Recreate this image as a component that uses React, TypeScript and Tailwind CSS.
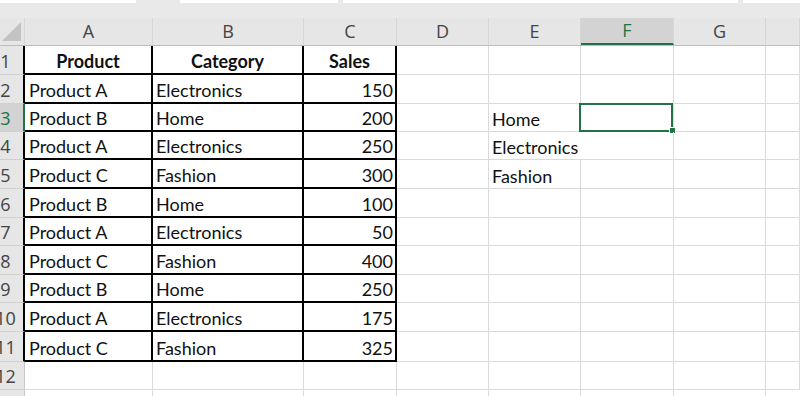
import React from "react";

type Row = [string, string, string];

const rows: Row[] = [
  ["Product A", "Electronics", "150"],
  ["Product B", "Home", "200"],
  ["Product A", "Electronics", "250"],
  ["Product C", "Fashion", "300"],
  ["Product B", "Home", "100"],
  ["Product A", "Electronics", "50"],
  ["Product C", "Fashion", "400"],
  ["Product B", "Home", "250"],
  ["Product A", "Electronics", "175"],
  ["Product C", "Fashion", "325"],
];

const rowHeights = [29, 29, 28, 28, 29, 29, 28, 29, 28, 29, 30, 28];

const sideList: Record<number, string> = { 3: "Home", 4: "Electronics", 5: "Fashion" };

const cellFont = "font-['Lato','Liberation_Sans',sans-serif] text-[18px] leading-[21px] text-[#111]";
const uiFont = "font-['Open_Sans','Liberation_Sans',sans-serif] text-[18px]";

const grid = "border-r border-b border-[#dadada]";
const boxed = "border-r-2 border-b-2 border-black";

function CornerMark() {
  return (
    <svg className="h-full w-full" viewBox="0 0 25 28" aria-hidden="true">
      <polygon points="22,4 22,24 2,24" fill="#c3c3c3" />
    </svg>
  );
}

function ColumnHeader({ label, width, active }: { label?: string; width: string; active?: boolean }) {
  return (
    <div
      className={`${width} flex shrink-0 items-center justify-center border-r border-[#d6d6d6] ${uiFont} ${
        active ? "border-b-2 border-b-[#217346] bg-[#d3d3d3] text-[#217346]" : "text-[#444]"
      }`}
    >
      {label}
    </div>
  );
}

function RowHeader({ n, active, edge }: { n: number; active?: boolean; edge: string }) {
  return (
    <div
      className={`flex w-[25px] shrink-0 items-center overflow-hidden border-b border-[#d0d0d0] ${edge} ${
        active ? "bg-[#d3d3d3] text-[#217346]" : "bg-[#e6e6e6] text-[#444]"
      }`}
    >
      <div className={`flex w-[11px] shrink-0 justify-center pt-[2px] ${uiFont}`}>{n}</div>
    </div>
  );
}

export default function App() {
  return (
    <div className="h-[396px] w-[800px] overflow-hidden bg-[#e6e6e6]">
      {/* formula bar remnants */}
      <div className="flex h-[18px] gap-[5px] bg-[#e9e9e9]">
        <div className="h-[3px] w-[136px] bg-white" />
        <div className="ml-[39px] h-[3px] w-[158px] bg-white" />
        <div className="h-[3px] w-[395px] bg-white" />
        <div className="h-[3px] flex-1 bg-white" />
      </div>

      {/* column letters */}
      <div className="flex h-[28px] border-b border-[#bdbdbd]">
        <div className="w-[25px] shrink-0 border-r border-[#d6d6d6]">
          <CornerMark />
        </div>
        <ColumnHeader label="A" width="w-[128px]" />
        <ColumnHeader label="B" width="w-[151px]" />
        <ColumnHeader label="C" width="w-[93px]" />
        <ColumnHeader label="D" width="w-[92px]" />
        <ColumnHeader label="E" width="w-[92px]" />
        <ColumnHeader label="F" width="w-[93px]" active />
        <ColumnHeader label="G" width="w-[92px]" />
        <ColumnHeader width="flex-1" />
      </div>

      {/* sheet body */}
      <div className="flex flex-col bg-white">
        {rowHeights.map((h, i) => {
          const n = i + 1;
          const inTable = n <= 11;
          const data = n >= 2 && n <= 11 ? rows[n - 2] : null;
          const cellBorder = inTable ? boxed : grid;
          const edge =
            n === 3
              ? "border-r-2 border-r-[#217346]"
              : inTable
                ? "border-r-2 border-r-black"
                : "border-r border-r-[#c8c8c8]";
          const text = sideList[n];

          return (
            <div className="flex" key={n} style={{ height: h }}>
              <RowHeader n={n} active={n === 3} edge={edge} />

              {n === 1 ? (
                <>
                  <div className={`flex w-[128px] shrink-0 items-end justify-center pb-[1px] font-bold ${cellBorder} ${cellFont}`}>
                    Product
                  </div>
                  <div className={`flex w-[151px] shrink-0 items-end justify-center pb-[1px] font-bold ${cellBorder} ${cellFont}`}>
                    Category
                  </div>
                  <div className={`flex w-[93px] shrink-0 items-end justify-center pb-[1px] font-bold ${cellBorder} ${cellFont}`}>
                    Sales
                  </div>
                </>
              ) : (
                <>
                  <div className={`flex w-[128px] shrink-0 items-end pb-[1px] pl-[4px] ${cellBorder} ${cellFont}`}>
                    {data?.[0]}
                  </div>
                  <div className={`flex w-[151px] shrink-0 items-end pb-[1px] pl-[3px] ${cellBorder} ${cellFont}`}>
                    {data?.[1]}
                  </div>
                  <div className={`flex w-[93px] shrink-0 items-end justify-end pb-[1px] pr-[2px] ${cellBorder} ${cellFont}`}>
                    {data?.[2]}
                  </div>
                </>
              )}

              <div className={`w-[92px] shrink-0 ${grid}`} />
              <div
                className={`flex w-[92px] shrink-0 items-end overflow-visible whitespace-nowrap pb-[1px] pl-[3px] ${cellFont} ${
                  n === 4 ? "border-b border-[#dadada]" : grid
                }`}
              >
                {text}
              </div>
              <div className={`relative w-[93px] shrink-0 ${grid}`}>
                {n === 3 ? (
                  <div className="absolute -left-[2px] -top-[1px] bottom-[-1px] right-0 border-2 border-[#217346]">
                    <div className="absolute -bottom-[4px] -right-[5px] h-[7px] w-[7px] border border-white bg-[#217346]" />
                  </div>
                ) : null}
              </div>
              <div className={`w-[92px] shrink-0 ${grid}`} />
              <div className={`flex-1 ${grid}`} />
            </div>
          );
        })}
        <div className="flex h-[10px]">
          <div className="w-[25px] shrink-0 border-r border-[#c8c8c8] bg-[#e6e6e6]" />
          <div className="w-[128px] shrink-0 border-r border-[#dadada]" />
          <div className="w-[151px] shrink-0 border-r border-[#dadada]" />
          <div className="w-[93px] shrink-0 border-r border-[#dadada]" />
          <div className="w-[92px] shrink-0 border-r border-[#dadada]" />
          <div className="w-[92px] shrink-0 border-r border-[#dadada]" />
          <div className="w-[93px] shrink-0 border-r border-[#dadada]" />
          <div className="w-[92px] shrink-0 border-r border-[#dadada]" />
          <div className="flex-1" />
        </div>
      </div>
    </div>
  );
}
